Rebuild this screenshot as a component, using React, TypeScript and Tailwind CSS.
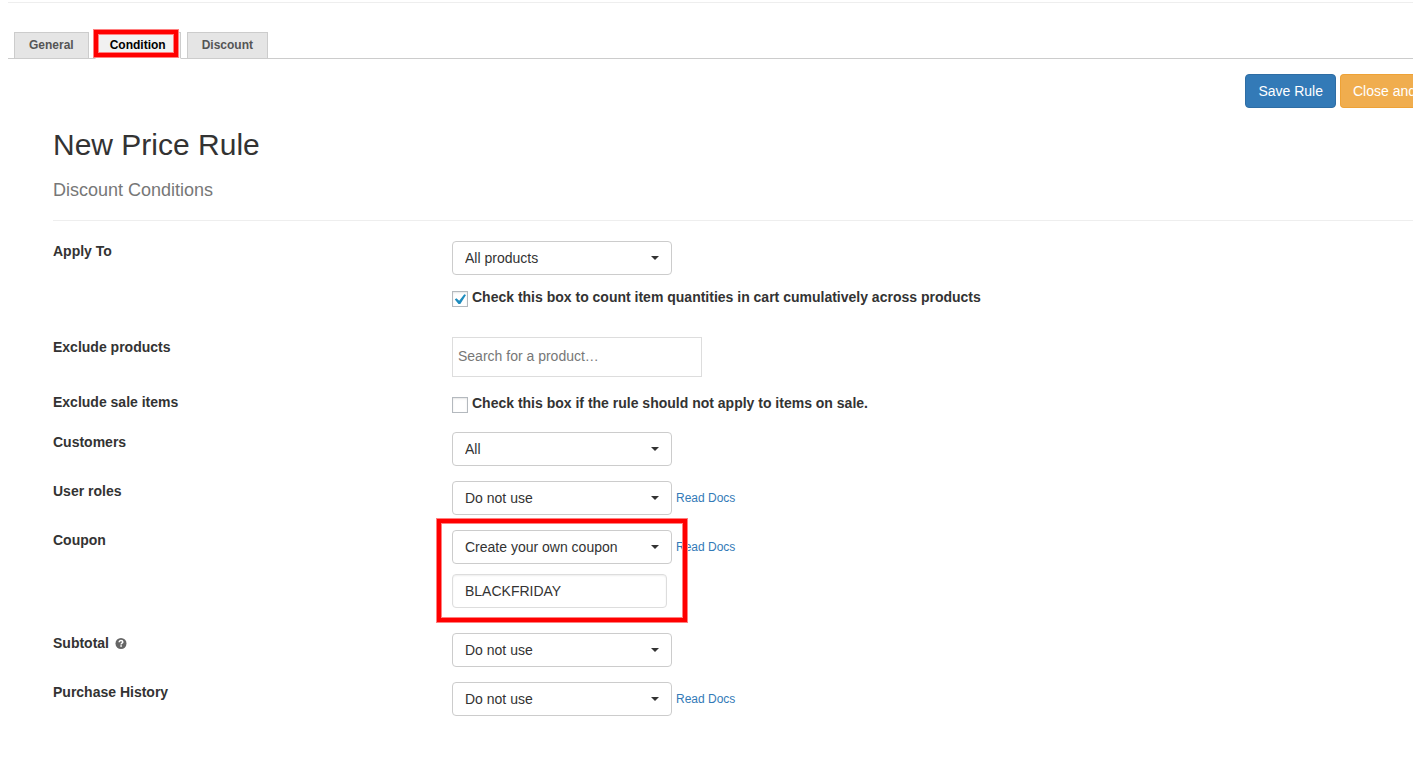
import { useState } from "react";
import type { ReactNode } from "react";
import clsx from "clsx";

const TABS = ["General", "Condition", "Discount"];

function Highlight({ className }: { className: string }) {
  return (
    <div
      className={clsx(
        "pointer-events-none absolute z-10 border border-[#ff8080]",
        className,
      )}
    >
      <div className="h-full border-4 border-[#ff0000]">
        <div className="h-full border border-[#ff8080]" />
      </div>
    </div>
  );
}

function Row({
  label,
  htmlFor,
  hint,
  className,
  children,
}: {
  label: string;
  htmlFor: string;
  hint?: ReactNode;
  className?: string;
  children: ReactNode;
}) {
  return (
    <div className={clsx("flex", className)}>
      <div className="flex w-[399px] shrink-0 items-center gap-1.5 self-start">
        <label htmlFor={htmlFor} className="font-bold">
          {label}
        </label>
        {hint}
      </div>
      <div className="min-w-0 flex-1">{children}</div>
    </div>
  );
}

function Select({
  id,
  options,
  docs,
}: {
  id: string;
  options: string[];
  docs?: boolean;
}) {
  return (
    <div className="flex items-center gap-1">
      <div className="relative w-[220px]">
        <select
          id={id}
          className="block h-[34px] w-full appearance-none rounded border border-[#ccc] bg-white px-3 text-sm text-[#333]"
        >
          {options.map((option) => (
            <option key={option}>{option}</option>
          ))}
        </select>
        <svg
          viewBox="0 0 8 4"
          className="pointer-events-none absolute right-[13px] top-[15px] h-1 w-2 fill-[#333]"
          aria-hidden="true"
        >
          <path d="M0 0h8L4 4z" />
        </svg>
      </div>
      {docs && (
        <a href="#docs" className="text-xs text-[#337ab7]">
          Read Docs
        </a>
      )}
    </div>
  );
}

function Checkbox({
  id,
  label,
  defaultChecked,
}: {
  id: string;
  label: string;
  defaultChecked?: boolean;
}) {
  const [checked, setChecked] = useState(!!defaultChecked);

  return (
    <div className="flex items-start gap-1">
      <span className="relative mt-1 h-4 w-4 shrink-0">
        <input
          id={id}
          type="checkbox"
          checked={checked}
          onChange={(e) => setChecked(e.target.checked)}
          className="block h-4 w-4 appearance-none border border-[#b4b9be] bg-white shadow-[inset_0_1px_2px_rgba(0,0,0,0.1)]"
        />
        {checked && (
          <svg
            viewBox="0 0 16 16"
            className="pointer-events-none absolute inset-0 h-4 w-4 fill-[#1e8cbe]"
            aria-hidden="true"
          >
            <path d="M12.3 3.2 14 4 8.3 13H6.5L2.8 8.6l1.6-1.3 2.8 2.5z" />
          </svg>
        )}
      </span>
      <label htmlFor={id} className="font-bold">
        {label}
      </label>
    </div>
  );
}

function HelpIcon() {
  return (
    <svg viewBox="0 0 12 12" className="h-3 w-3" role="img" aria-label="Help">
      <circle cx="6" cy="6.5" r="5.5" fill="#666" />
      <path
        d="M4.2 5.2c0-1.1.8-1.7 1.8-1.7s1.8.6 1.8 1.5c0 1.2-1.7 1.1-1.7 2.4"
        fill="none"
        stroke="#fff"
        strokeWidth="1.5"
      />
      <path d="M5.3 8.2h1.6v1.5H5.3z" fill="#fff" />
    </svg>
  );
}

export default function App() {
  const [tab, setTab] = useState("Condition");

  return (
    <main className="min-h-screen overflow-x-hidden bg-white pb-11 pt-0.5 font-['Liberation_Sans',Arial,sans-serif] text-sm leading-5 text-[#333]">
      <hr className="ml-2 border-[#eee]" />

      <nav className="ml-2 mt-[29px] flex gap-1.5 border-b border-[#ccc] pl-1.5">
        {TABS.map((name) => (
          <div key={name} className="relative -mb-px">
            <button
              type="button"
              onClick={() => setTab(name)}
              className={clsx(
                "block h-[27px] border px-3.5 pb-0.5 text-xs font-bold",
                name === tab
                  ? "border-[#ccc] border-b-white bg-[#f1f1f1] text-black"
                  : "border-[#ccc] bg-[#e5e5e5] text-[#555]",
              )}
            >
              {name}
            </button>
            {name === "Condition" && (
              <Highlight className="-left-0.5 -top-[3px] bottom-px right-0.5" />
            )}
          </div>
        ))}
      </nav>

      <div className="mt-[15px] flex justify-end gap-1">
        <button
          type="button"
          className="h-[34px] rounded border border-[#2e6da4] bg-[#337ab7] px-3 text-white"
        >
          Save Rule
        </button>
        <button
          type="button"
          className="h-[34px] w-[73px] overflow-hidden whitespace-nowrap rounded-l border border-r-0 border-[#eea236] bg-[#f0ad4e] pl-3 text-left text-white"
        >
          Close and
        </button>
      </div>

      <div className="ml-[53px] mt-5">
        <h1 className="text-[30px] leading-[33px]">New Price Rule</h1>
        <h2 className="mt-[19px] text-lg leading-5 text-[#777]">
          Discount Conditions
        </h2>
        <hr className="mb-5 mt-5 border-[#eee]" />

        <form className="flex flex-col gap-[15px]">
          <Row label="Apply To" htmlFor="apply-to" className="pb-[15px]">
            <Select id="apply-to" options={["All products"]} />
            <div className="mt-3">
              <Checkbox
                id="cumulative"
                label="Check this box to count item quantities in cart cumulatively across products"
                defaultChecked
              />
            </div>
          </Row>

          <Row label="Exclude products" htmlFor="exclude-products">
            <input
              id="exclude-products"
              type="text"
              placeholder="Search for a product…"
              className="block h-10 w-[250px] border border-[#ddd] px-[5px] pb-0.5 placeholder:text-[#777]"
            />
          </Row>

          <Row label="Exclude sale items" htmlFor="exclude-sale">
            <div className="pb-1 pt-px">
              <Checkbox
                id="exclude-sale"
                label="Check this box if the rule should not apply to items on sale."
              />
            </div>
          </Row>

          <Row label="Customers" htmlFor="customers">
            <Select id="customers" options={["All"]} />
          </Row>

          <Row label="User roles" htmlFor="roles">
            <Select id="roles" options={["Do not use"]} docs />
          </Row>

          <Row label="Coupon" htmlFor="coupon" className="pb-2.5">
            <div className="relative">
              <Select
                id="coupon"
                options={["Create your own coupon", "Do not use"]}
                docs
              />
              <input
                type="text"
                aria-label="Coupon code"
                defaultValue="BLACKFRIDAY"
                className="mt-2.5 block h-[34px] w-[215px] rounded border border-[#ddd] px-3 shadow-[inset_0_1px_2px_rgba(0,0,0,0.07)]"
              />
              <Highlight className="-bottom-[15px] -left-4 -top-3 w-[252px]" />
            </div>
          </Row>

          <Row label="Subtotal" htmlFor="subtotal" hint={<HelpIcon />}>
            <Select id="subtotal" options={["Do not use"]} />
          </Row>

          <Row label="Purchase History" htmlFor="history">
            <Select id="history" options={["Do not use"]} docs />
          </Row>
        </form>
      </div>
    </main>
  );
}
